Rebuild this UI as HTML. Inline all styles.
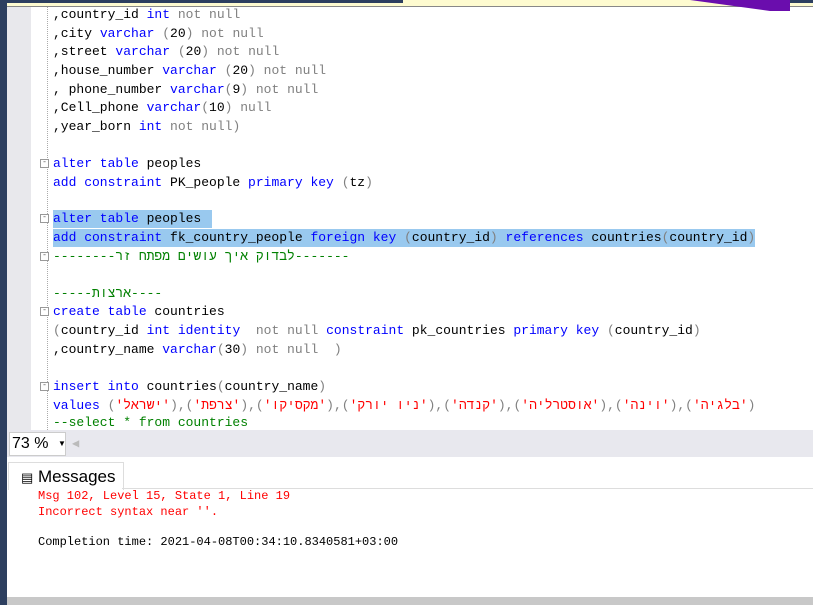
<!DOCTYPE html>
<html><head><meta charset="utf-8"><style>
body{margin:0;width:813px;height:605px;overflow:hidden;background:#fff;position:relative;font-family:"Liberation Mono",monospace}
.abs{position:absolute}
.l{position:absolute;left:53px;font-size:13px;white-space:pre;line-height:18px;color:#000;margin-top:1px}
.k{color:#0000ff}.g{color:#808080}.c{color:#008000}.r{color:#ff0000}
.hl{background:#99c9ef}
.box{position:absolute;left:40px;width:7px;height:7px;border:1px solid #999;background:#fff;font-size:8px;line-height:6px;text-align:center;color:#555;margin-top:1px}
</style></head><body>
<div class="abs" style="left:0;top:0;width:7px;height:605px;background:#2d3f5f"></div>
<div class="abs" style="left:7px;top:0;width:806px;height:6px;background:#fefbd0;border-bottom:1px solid #888"></div>
<div class="abs" style="left:7px;top:0;width:396px;height:3px;background:#2d3f5f"></div>
<div class="abs" style="left:789px;top:0;width:24px;height:3px;background:#2d3f5f"></div>
<svg class="abs" style="left:690px;top:0" width="100" height="12"><polygon points="0,0 100,0 100,11 80,11" fill="#6a0dad"/></svg>
<div class="abs" style="left:7px;top:7px;width:24px;height:423px;background:#e8e8ec"></div>
<div class="abs" style="left:47px;top:7px;width:0;height:423px;border-left:1px dotted #aaa"></div>
<div class="l" style="top:5px">,country_id <span class="k">int</span> <span class="g">not null</span></div>
<div class="l" style="top:24px">,city <span class="k">varchar</span> <span class="g">(</span>20<span class="g">) not null</span></div>
<div class="l" style="top:42px">,street <span class="k">varchar</span> <span class="g">(</span>20<span class="g">) not null</span></div>
<div class="l" style="top:61px">,house_number <span class="k">varchar</span> <span class="g">(</span>20<span class="g">) not null</span></div>
<div class="l" style="top:80px">, phone_number <span class="k">varchar</span><span class="g">(</span>9<span class="g">) not null</span></div>
<div class="l" style="top:98px">,Cell_phone <span class="k">varchar</span><span class="g">(</span>10<span class="g">) null</span></div>
<div class="l" style="top:117px">,year_born <span class="k">int</span> <span class="g">not null)</span></div>
<div class="box" style="top:158px">-</div>
<div class="l" style="top:154px"><span class="k">alter table</span> peoples</div>
<div class="l" style="top:173px"><span class="k">add constraint</span> PK_people <span class="k">primary key</span> <span class="g">(</span>tz<span class="g">)</span></div>
<div class="box" style="top:213px">-</div>
<div class="l hl" style="top:209px;width:159px"><span class="k">alter table</span> peoples </div>
<div class="l hl" style="top:228px;width:702px"><span class="k">add constraint</span> fk_country_people <span class="k">foreign key</span> <span class="g">(</span>country_id<span class="g">)</span> <span class="k">references</span> countries<span class="g">(</span>country_id<span class="g">)</span></div>
<div class="box" style="top:251px">-</div>
<div class="l c" style="top:247px;font-family:'Liberation Mono','Noto Sans CJK JP',monospace">--------לבדוק איך עושים מפתח זר-------</div>
<div class="l c" style="top:284px;font-family:'Liberation Mono','Noto Sans CJK JP',monospace">-----ארצות----</div>
<div class="box" style="top:306px">-</div>
<div class="l" style="top:302px"><span class="k">create table</span> countries</div>
<div class="l" style="top:321px"><span class="g">(</span>country_id <span class="k">int identity</span>  <span class="g">not null</span> <span class="k">constraint</span> pk_countries <span class="k">primary key</span> <span class="g">(</span>country_id<span class="g">)</span></div>
<div class="l" style="top:340px">,country_name <span class="k">varchar</span><span class="g">(</span>30<span class="g">) not null  )</span></div>
<div class="box" style="top:381px">-</div>
<div class="l" style="top:377px"><span class="k">insert into</span> countries<span class="g">(</span>country_name<span class="g">)</span></div>
<div class="l" style="top:396px;font-family:'Liberation Mono','Noto Sans CJK JP',monospace"><span class="k">values</span> <span class="g">(</span><span class="r">'ישראל'</span><span class="g">),(</span><span class="r">'צרפת'</span><span class="g">),(</span><span class="r">'מקסיקו'</span><span class="g">),(</span><span class="r">'ניו יורק'</span><span class="g">),(</span><span class="r">'קנדה'</span><span class="g">),(</span><span class="r">'אוסטרליה'</span><span class="g">),(</span><span class="r">'וינה'</span><span class="g">),(</span><span class="r">'בלגיה'</span><span class="g">)</span></div>
<div class="l c" style="top:413px">--select * from countries</div>
<div class="abs" style="left:7px;top:430px;width:806px;height:27px;background:#e8e8ee"></div>
<div class="abs" style="left:9px;top:432px;width:55px;height:22px;background:#fff;border:1px solid #ccc;font-family:'Liberation Sans',sans-serif;font-size:16px;line-height:22px;color:#000"><span style="margin-left:2px">73 %</span><span style="position:absolute;left:48px;font-size:8px">▼</span></div>
<div class="abs" style="left:72px;top:436px;color:#bbb;font-size:12px">◀</div>
<div class="abs" style="left:7px;top:457px;width:806px;height:140px;background:#fff"></div>
<div class="abs" style="left:8px;top:462px;width:114px;height:27px;background:#fff;border:1px solid #ddd;border-bottom:none;font-family:'Liberation Sans',sans-serif;font-size:17px;line-height:27px"><span style="font-size:13px;margin-left:12px">▤</span> Messages</div>
<div class="abs" style="left:122px;top:488px;width:691px;border-top:1px solid #ddd"></div>
<div class="abs r" style="left:38px;top:488px;font-size:12px;line-height:16px;white-space:pre">Msg 102, Level 15, State 1, Line 19
Incorrect syntax near ''.</div>
<div class="abs" style="left:38px;top:535px;font-size:12px;white-space:pre">Completion time: 2021-04-08T00:34:10.8340581+03:00</div>
<div class="abs" style="left:7px;top:597px;width:806px;height:8px;background:#c8c8c8"></div>
</body></html>
